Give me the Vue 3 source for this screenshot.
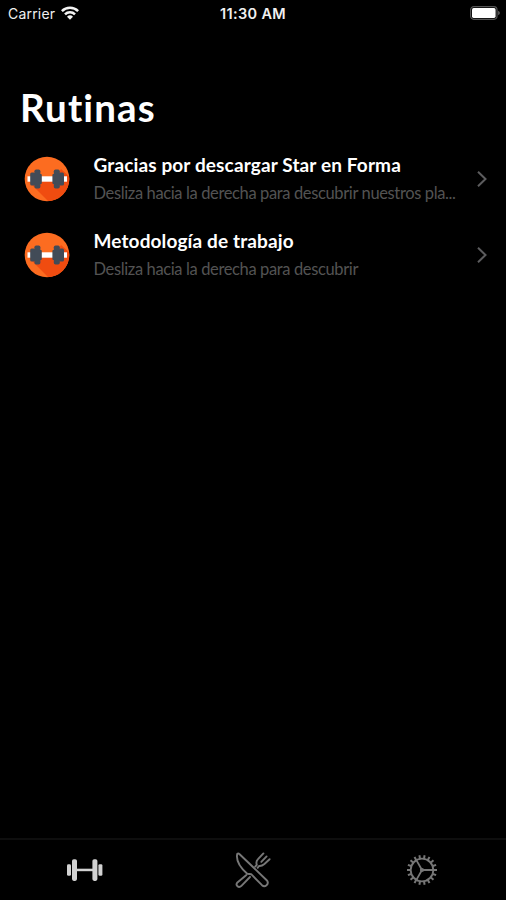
<script setup>
const routines = [
  { title: 'Gracias por descargar Star en Forma', detail: 'Desliza hacia la derecha para descubrir nuestros pla...', key: 'thanks' },
  { title: 'Metodología de trabajo', detail: 'Desliza hacia la derecha para descubrir', key: 'method' },
]
const teeth = Array.from({ length: 18 }, (_, i) => i * 20)
</script>

<template>
  <div class="screen">
    <header class="status">
      <div class="carrier">
        <span class="carrier-name">Carrier</span>
        <svg class="wifi" width="20" height="16" viewBox="0 0 20 16">
          <g fill="none" stroke="#f4f4f4" stroke-width="2.5">
            <path d="M1.9 6.2A11.4 11.4 0 0 1 18.1 6.2" />
            <path d="M5 9.4A7 7 0 0 1 15 9.4" />
          </g>
          <path d="M10 14.8L7 11.8A4.3 4.3 0 0 1 13 11.8Z" fill="#f4f4f4" />
        </svg>
      </div>
      <time class="clock">11:30 AM</time>
      <svg class="battery" width="32" height="16" viewBox="0 0 32 16">
        <rect x="1.6" y="1.7" width="26.4" height="12.6" rx="3.2" fill="none" stroke="#555" stroke-width="1.2" />
        <rect x="3" y="3.1" width="23.6" height="9.8" rx="1.6" fill="#fff" />
        <path d="M29 5.8q2 .7 2 2.2t-2 2.2z" fill="#555" />
      </svg>
    </header>

    <h1 class="heading">Rutinas</h1>

    <ul class="list">
      <li v-for="item in routines" :key="item.key" class="row">
        <svg class="badge" width="46" height="46" viewBox="0 0 46 46">
          <defs>
            <clipPath :id="item.key"><circle cx="23" cy="23" r="22.3" /></clipPath>
          </defs>
          <circle cx="23" cy="23" r="22.3" fill="#fc6c20" />
          <path :clip-path="`url(#${item.key})`" d="M5 26L25 46H46V21L37 13L30 25H16V31Z" fill="#f04c10" />
          <rect x="3.5" y="20.3" width="39.5" height="5.4" fill="#fff" />
          <g fill="#424b57">
            <rect x="6.2" y="16.5" width="5" height="13" rx="1.5" />
            <rect x="10.4" y="13.5" width="6" height="19" rx="1.7" />
            <rect x="15" y="18" width="2.8" height="10" rx="1" />
            <rect x="35" y="16.5" width="5" height="13" rx="1.5" />
            <rect x="29.8" y="13.5" width="6" height="19" rx="1.7" />
            <rect x="28.4" y="18" width="2.8" height="10" rx="1" />
          </g>
        </svg>
        <div class="copy">
          <div class="title">{{ item.title }}</div>
          <div class="detail">{{ item.detail }}</div>
        </div>
        <svg class="chevron" width="12" height="18" viewBox="0 0 12 18">
          <path d="M2 1.8L9.5 9L2 16.2" fill="none" stroke="#5c5c5e" stroke-width="2" />
        </svg>
      </li>
    </ul>

    <nav class="tabs">
      <div class="tab">
        <svg width="38" height="38" viewBox="0 0 38 38" fill="#d2d2d2">
          <rect x="10" y="17.7" width="20" height="2.5" />
          <rect x="2" y="13.2" width="4" height="11.6" rx="1.4" />
          <rect x="33.4" y="13.2" width="4" height="11.6" rx="1.4" />
          <rect x="7" y="8.3" width="5" height="21.6" rx="1.8" />
          <rect x="27.4" y="8.3" width="5" height="21.6" rx="1.8" />
        </svg>
      </div>
      <div class="tab">
        <svg width="38" height="38" viewBox="0 0 38 38" fill="none" stroke="#777" stroke-width="1.9" stroke-linecap="round" stroke-linejoin="round">
          <path d="M3.2 3C2 9 6 16.5 13.2 22.8L17.2 23.2L28 34.2Q30.3 36.2 32.5 34.2Q35 31.8 32.7 29.2L5.6 3.2Q4.2 2 3.2 3Z" />
          <path d="M12.4 24L3.4 31.4Q1.6 33.8 3.5 35.3Q5.4 36.8 7.4 34.8L16 26" />
          <path d="M21.2 15.6L22.8 13.8Q21.6 10.6 24 8.2L29.4 2.4M35.6 8.2L30.4 13Q27.6 15.4 25 15L23.6 16.8" />
          <path d="M27.3 10.9L32.6 5.4" />
        </svg>
      </div>
      <div class="tab">
        <svg width="38" height="38" viewBox="0 0 38 38" fill="none" stroke="#777" stroke-width="1.8">
          <circle cx="19" cy="19" r="11.3" />
          <path v-for="angle in teeth" :key="angle" :transform="`rotate(${angle + 10} 19 19)`" d="M19 7.4V4" stroke-width="2" />
          <path d="M30 19H19L13.5 9.4M19 19L13.5 28.6" />
          <circle cx="19" cy="19" r="1.2" />
        </svg>
      </div>
    </nav>
  </div>
</template>

<style>
body {
  background: #000;
}
</style>

<style scoped>
.screen {
  display: flex;
  flex-direction: column;
  box-sizing: border-box;
  width: 506px;
  height: 900px;
  background: #000;
  color: #fff;
  font-family: Lato, sans-serif;
  overflow: hidden;
}

.status {
  display: grid;
  grid-template-columns: 1fr auto 1fr;
  align-items: center;
  height: 26px;
  padding: 0 5px 0 8px;
  font-family: Inter, sans-serif;
  font-size: 14px;
  color: #f0f0f0;
}

.carrier {
  display: flex;
  align-items: center;
  gap: 5px;
}

.carrier-name {
  letter-spacing: 0.2px;
}

.clock {
  margin-right: 3px;
  font-size: 14.5px;
  font-weight: 600;
  letter-spacing: 0.35px;
}

.battery {
  justify-self: end;
}

.heading {
  margin: 58px 0 0 20px;
  height: 46px;
  font-size: 38.5px;
  line-height: 46px;
  font-weight: 700;
  letter-spacing: 1.1px;
}

.list {
  list-style: none;
  margin: 11px 0 0;
  padding: 0;
}

.row {
  display: flex;
  align-items: center;
  height: 76px;
  box-sizing: border-box;
  padding: 0 18px 0 24px;
}

.copy {
  flex: 1;
  margin-left: 23.5px;
  white-space: nowrap;
}

.title {
  font-size: 19px;
  line-height: 26px;
  font-weight: 700;
  letter-spacing: 0.13px;
}

.detail {
  margin-top: 2px;
  font-size: 16.5px;
  line-height: 26px;
  letter-spacing: -0.37px;
  color: #535353;
}

.chevron {
  flex: none;
}

.badge {
  flex: none;
}

.tabs {
  display: grid;
  grid-template-columns: repeat(3, 1fr);
  box-sizing: border-box;
  height: 62px;
  margin-top: auto;
  border-top: 2px solid #0e0e0e;
}

.tab {
  display: grid;
  place-items: center;
}
</style>
